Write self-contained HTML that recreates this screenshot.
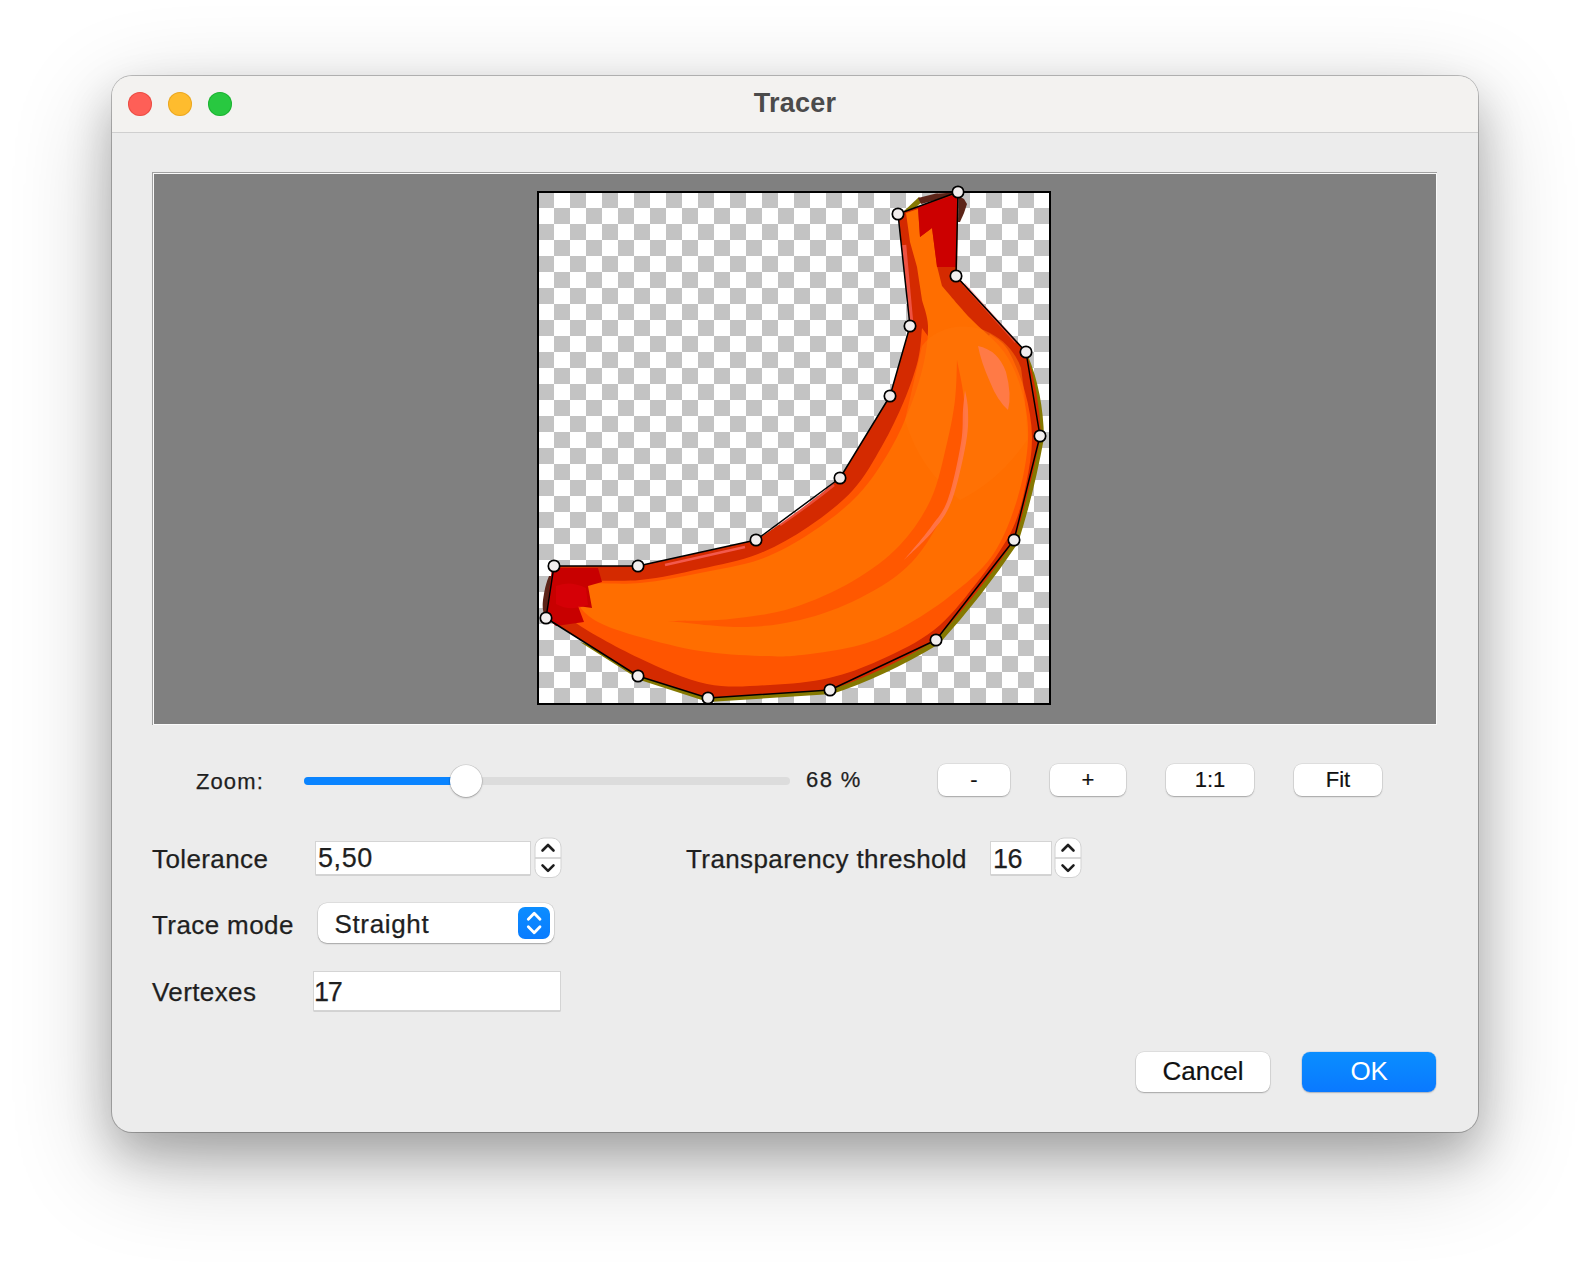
<!DOCTYPE html>
<html><head><meta charset="utf-8">
<style>
html,body{margin:0;padding:0;width:1590px;height:1280px;overflow:hidden;background:#ffffff;}
body{font-family:"Liberation Sans",sans-serif;position:relative;}
.abs{position:absolute;}
#win{position:absolute;left:112px;top:76px;width:1366px;height:1056px;border-radius:20px;background:#ececec;
 box-shadow:0 0 0 1px rgba(0,0,0,0.24),0 22px 45px rgba(0,0,0,0.22),0 30px 100px rgba(0,0,0,0.24);overflow:hidden;}
#title{position:absolute;left:0;top:0;width:1366px;height:56px;background:#f3f2f0;border-bottom:1px solid #cfcfcf;}
.tl{position:absolute;top:16px;width:24px;height:24px;border-radius:50%;}
.ttl{position:absolute;left:0;width:1366px;top:-1px;height:56px;line-height:56px;text-align:center;font-weight:700;font-size:27px;color:#4b4b4b;letter-spacing:0.2px;}
.lbl{position:absolute;font-size:26px;color:#1f1f1f;white-space:pre;line-height:30px;letter-spacing:0.4px;-webkit-text-stroke:0.25px #1f1f1f;}
.fld{position:absolute;background:#fff;box-shadow:0 0 0 1px #d4d4d4,0 1px 0 0.5px #b8b8b8;}
.btn{position:absolute;background:#fff;border-radius:8px;box-shadow:0 0 0 0.5px rgba(0,0,0,0.12),0 1px 1.5px rgba(0,0,0,0.25);text-align:center;color:#111;font-size:22px;-webkit-text-stroke:0.2px currentColor;}
</style></head><body>
<div id="win">
  <div id="title">
    <div class="tl" style="left:16px;background:#fe5f57;box-shadow:inset 0 0 0 1px rgba(200,40,30,0.35)"></div>
    <div class="tl" style="left:56px;background:#febc2e;box-shadow:inset 0 0 0 1px rgba(200,130,0,0.35)"></div>
    <div class="tl" style="left:96px;background:#28c840;box-shadow:inset 0 0 0 1px rgba(0,140,20,0.35)"></div>
    <div class="ttl">Tracer</div>
  </div>
</div>
<!-- preview -->
<div class="abs" style="left:152px;top:172px;width:1285px;height:553px;background:#fafafa;box-shadow:inset 1px 1px 0 #a0a0a0;"></div>
<div class="abs" style="left:154px;top:174px;width:1282px;height:550px;background:#808080;"></div>
<svg class="abs" style="left:527px;top:181px;" width="534" height="534" viewBox="527 181 534 534">
<defs>
<pattern id="chk" x="538" y="192" width="32" height="32" patternUnits="userSpaceOnUse"><rect width="32" height="32" fill="#ffffff"/><rect width="16" height="16" fill="#c3c3c3"/><rect x="16" y="16" width="16" height="16" fill="#c3c3c3"/></pattern>
</defs>
<rect x="537" y="191" width="514" height="514" fill="url(#chk)"/>
<g id="banana">
<!-- olive shadow (right/bottom only) -->
<path d="M 1028,356 Q 1043,392 1044,438 Q 1034,493 1018,543 Q 981,598 939,644 Q 884,677 832,694 L 708,702 L 640,680 L 580,642 L 640,660 L 710,690 L 830,686 L 930,636 L 1010,538 L 1036,436 Q 1034,392 1022,356 Z" fill="#857800"/>
<!-- dark brown blotches -->
<path d="M 904,211 L 919,197 L 923,201 L 908,214 Z" fill="#857800"/>
<path d="M 918,198 L 936,193.5 L 957,192.5 L 958,194 L 921,204 Z" fill="#5c2418"/>
<path d="M 958.5,196 L 964,199 L 967,204 L 964,213 L 960,222 L 958,222 Z" fill="#5c2418"/>
<path d="M 549,576 Q 545,585 543,600 Q 542,608 544,614 L 547,612 L 552,576 Z" fill="#5c2418"/>
<!-- outer red -->
<path d="M 898,214 L 958,192 L 957,276 L 1026,352 Q 1039,390 1041,436 Q 1030,490 1015,540 Q 978,594 936,640 Q 881,673 830,690 L 708,698 L 638,676 L 546,618 L 554,566 L 638,566 L 756,540 Q 800,512 840,478 L 890,396 L 910,326 Z" fill="#d42a00"/>
<!-- orange-red band -->
<path d="M 990.0,334.0 C 993.0,336.7 1002.2,340.3 1008.0,350.0 C 1013.8,359.7 1021.0,377.5 1025.0,392.0 C 1029.0,406.5 1031.8,421.7 1032.0,437.0 C 1032.2,452.3 1029.5,468.2 1026.0,484.0 C 1022.5,499.8 1019.5,515.2 1011.0,532.0 C 1002.5,548.8 987.8,568.7 975.0,585.0 C 962.2,601.3 949.8,617.5 934.0,630.0 C 918.2,642.5 897.5,652.0 880.0,660.0 C 862.5,668.0 847.3,673.8 829.0,678.0 C 810.7,682.2 790.3,684.0 770.0,685.0 C 749.7,686.0 728.8,688.5 707.0,684.0 C 685.2,679.5 661.5,668.7 639.0,658.0 C 616.5,647.3 584.0,629.7 572.0,620.0 C 560.0,610.3 567.7,606.3 567.0,600.0 C 566.3,593.7 555.8,585.3 568.0,582.0 C 580.2,578.7 618.0,582.2 640.0,580.0 C 662.0,577.8 680.3,573.3 700.0,569.0 C 719.7,564.7 740.0,561.0 758.0,554.0 C 776.0,547.0 792.2,537.7 808.0,527.0 C 823.8,516.3 840.7,503.5 853.0,490.0 C 865.3,476.5 873.5,460.8 882.0,446.0 C 890.5,431.2 898.0,415.3 904.0,401.0 C 910.0,386.7 915.0,372.2 918.0,360.0 C 921.0,347.8 921.3,333.3 922.0,328.0 L 960,380 Z" fill="#ff5500"/>
<!-- main orange -->
<path d="M 942.0,286.0 C 946.7,291.3 959.7,307.0 970.0,318.0 C 980.3,329.0 995.3,339.7 1004.0,352.0 C 1012.7,364.3 1018.0,377.3 1022.0,392.0 C 1026.0,406.7 1028.8,422.0 1028.0,440.0 C 1027.2,458.0 1023.0,480.7 1017.0,500.0 C 1011.0,519.3 1003.2,540.0 992.0,556.0 C 980.8,572.0 964.8,584.2 950.0,596.0 C 935.2,607.8 918.0,618.8 903.0,627.0 C 888.0,635.2 876.8,640.3 860.0,645.0 C 843.2,649.7 818.7,653.2 802.0,655.0 C 785.3,656.8 777.0,656.7 760.0,656.0 C 743.0,655.3 720.0,654.2 700.0,651.0 C 680.0,647.8 657.0,641.8 640.0,637.0 C 623.0,632.2 608.3,627.5 598.0,622.0 C 587.7,616.5 581.7,610.2 578.0,604.0 C 574.3,597.8 565.7,588.5 576.0,585.0 C 586.3,581.5 619.3,585.0 640.0,583.0 C 660.7,581.0 679.8,577.0 700.0,573.0 C 720.2,569.0 742.3,565.8 761.0,559.0 C 779.7,552.2 795.8,542.7 812.0,532.0 C 828.2,521.3 845.0,508.7 858.0,495.0 C 871.0,481.3 881.2,465.0 890.0,450.0 C 898.8,435.0 905.3,419.7 911.0,405.0 C 916.7,390.3 921.2,375.2 924.0,362.0 C 926.8,348.8 928.3,336.3 928.0,326.0 C 927.7,315.7 923.0,304.3 922.0,300.0 L 917,267 L 910,242 L 906,213 L 918,209 L 920,237 L 932,228 L 937,266 Z" fill="#ff6e00"/>
<!-- lighter upper body -->
<path d="M 922,346 C 935,328 965,320 990,333 C 1005,341 1015,352 1021,368 Q 1026,400 1027,440 Q 1000,480 960,500 Q 920,470 905,420 Z" fill="#ff7408" opacity="0.55"/>
<!-- ridge -->
<path d="M 668.0,621.0 C 680.0,622.0 718.0,627.2 740.0,627.0 C 762.0,626.8 780.0,624.8 800.0,620.0 C 820.0,615.2 841.3,607.7 860.0,598.0 C 878.7,588.3 897.5,577.5 912.0,562.0 C 926.5,546.5 938.5,524.8 947.0,505.0 C 955.5,485.2 960.2,460.5 963.0,443.0 C 965.8,425.5 965.0,413.8 964.0,400.0 C 963.0,386.2 958.2,366.7 957.0,360.0 C 956.7,366.7 956.7,386.2 955.0,400.0 C 953.3,413.8 951.0,426.5 947.0,443.0 C 943.0,459.5 938.8,482.0 931.0,499.0 C 923.2,516.0 913.0,531.3 900.0,545.0 C 887.0,558.7 871.0,570.5 853.0,581.0 C 835.0,591.5 812.5,601.7 792.0,608.0 C 771.5,614.3 750.7,616.8 730.0,619.0 C 709.3,621.2 678.3,620.7 668.0,621.0 Z" fill="#ff5800"/>
<path d="M 904.0,560.0 C 908.8,555.2 925.0,541.0 933.0,531.0 C 941.0,521.0 946.5,514.7 952.0,500.0 C 957.5,485.3 963.3,458.0 966.0,443.0 C 968.7,428.0 968.2,418.8 968.0,410.0 C 967.8,401.2 965.5,393.3 965.0,390.0 C 964.7,393.3 963.7,401.2 963.0,410.0 C 962.3,418.8 963.5,428.2 961.0,443.0 C 958.5,457.8 953.0,485.0 948.0,499.0 C 943.0,513.0 938.3,516.8 931.0,527.0 C 923.7,537.2 908.5,554.5 904.0,560.0 Z" fill="#ff7a58" opacity="0.8"/>
<!-- shoulder pink patch -->
<path d="M 978,346 Q 998,350 1006,372 Q 1012,395 1008,410 Q 997,400 990,382 Q 981,362 978,346 Z" fill="#ff7b52" opacity="0.85"/>
<!-- top edge pink highlights -->
<path d="M 665,565 Q 705,556 745,547" stroke="#ff6e6e" stroke-width="2.5" fill="none" opacity="0.7"/>
<path d="M 780,525 Q 812,503 834,485" stroke="#ff6e6e" stroke-width="2.5" fill="none" opacity="0.5"/>
<path d="M 904,245 L 911,322" stroke="#ff6e6e" stroke-width="4.5" fill="none" opacity="0.6"/>
<path d="M 964,284 L 1016,342" stroke="#ff6e6e" stroke-width="3" fill="none" opacity="0.45"/>
<!-- stem red -->
<path d="M 918,207 L 957,194 L 956,267 L 937,267 L 932,228 L 920,237 Z" fill="#cc0000"/>
<!-- tip red -->
<path d="M 552,568 L 598,568 L 602,582 L 588,586 L 592,608 L 578,606 L 584,622 L 556,626 L 546,617 Z" fill="#c80000"/>
<path d="M 556,586 Q 570,580 586,588 L 588,605 Q 570,612 556,604 Z" fill="#d80008" opacity="0.8"/>
</g>
<rect x="538" y="192" width="512" height="512" fill="none" stroke="#000" stroke-width="2"/>
<!-- trace polygon -->
<polygon points="958,192 956,276 1026,352 1040,436 1014,540 936,640 830,690 708,698 638,676 546,618 554,566 638,566 756,540 840,478 890,396 910,326 898,214" fill="none" stroke="#000" stroke-width="1.5" stroke-linejoin="round"/>
<g fill="#f2eeee" stroke="#000" stroke-width="1.7">
<circle cx="958" cy="192" r="5.7"/><circle cx="956" cy="276" r="5.7"/><circle cx="1026" cy="352" r="5.7"/><circle cx="1040" cy="436" r="5.7"/><circle cx="1014" cy="540" r="5.7"/><circle cx="936" cy="640" r="5.7"/><circle cx="830" cy="690" r="5.7"/><circle cx="708" cy="698" r="5.7"/><circle cx="638" cy="676" r="5.7"/><circle cx="546" cy="618" r="5.7"/><circle cx="554" cy="566" r="5.7"/><circle cx="638" cy="566" r="5.7"/><circle cx="756" cy="540" r="5.7"/><circle cx="840" cy="478" r="5.7"/><circle cx="890" cy="396" r="5.7"/><circle cx="910" cy="326" r="5.7"/><circle cx="898" cy="214" r="5.7"/>
</g>
</svg>

<div class="lbl" style="left:196px;top:767px;font-size:22px;letter-spacing:1.1px;">Zoom:</div>
<div class="abs" style="left:304px;top:777px;width:486px;height:8px;border-radius:4px;background:#dcdcdc;"></div>
<div class="abs" style="left:304px;top:777px;width:166px;height:8px;border-radius:4px;background:#0a84ff;"></div>
<div class="abs" style="left:449.5px;top:765px;width:32px;height:32px;border-radius:50%;background:#fff;box-shadow:0 0 0 0.5px rgba(0,0,0,0.15),0 1px 2px rgba(0,0,0,0.28);"></div>
<div class="lbl" style="left:806px;top:765px;font-size:22px;letter-spacing:1.4px;">68 %</div>

<div class="btn" style="left:938px;top:764px;width:72px;height:32px;line-height:32px;">-</div>
<div class="btn" style="left:1050px;top:764px;width:76px;height:32px;line-height:32px;">+</div>
<div class="btn" style="left:1166px;top:764px;width:88px;height:32px;line-height:32px;">1:1</div>
<div class="btn" style="left:1294px;top:764px;width:88px;height:32px;line-height:32px;">Fit</div>

<div class="lbl" style="left:152px;top:844px;">Tolerance</div>
<div class="fld" style="left:316px;top:842px;width:214px;height:32px;"></div>
<div class="lbl" style="left:318px;top:842.5px;letter-spacing:0.6px;font-size:27px;">5,50</div>
<svg class="abs" style="left:534px;top:837px" width="28" height="42" viewBox="0 0 28 42">
<rect x="1" y="1" width="26" height="39.5" rx="9" fill="#fff" stroke="#d2d2d2" stroke-width="1"/>
<line x1="1" y1="21" x2="27" y2="21" stroke="#d0d0d0" stroke-width="1.6"/>
<polyline points="8.5,13.5 14,8 19.5,13.5" fill="none" stroke="#1e1e1e" stroke-width="2.6" stroke-linecap="round" stroke-linejoin="round"/>
<polyline points="8.5,28.3 14,33.8 19.5,28.3" fill="none" stroke="#1e1e1e" stroke-width="2.6" stroke-linecap="round" stroke-linejoin="round"/>
</svg>

<div class="lbl" style="left:686px;top:844px;">Transparency threshold</div>
<div class="fld" style="left:991px;top:842px;width:60px;height:32px;"></div>
<div class="lbl" style="left:993px;top:843.5px;letter-spacing:-0.5px;font-size:27px;">16</div>
<svg class="abs" style="left:1054px;top:837px" width="28" height="42" viewBox="0 0 28 42">
<rect x="1" y="1" width="26" height="39.5" rx="9" fill="#fff" stroke="#d2d2d2" stroke-width="1"/>
<line x1="1" y1="21" x2="27" y2="21" stroke="#d0d0d0" stroke-width="1.6"/>
<polyline points="8.5,13.5 14,8 19.5,13.5" fill="none" stroke="#1e1e1e" stroke-width="2.6" stroke-linecap="round" stroke-linejoin="round"/>
<polyline points="8.5,28.3 14,33.8 19.5,28.3" fill="none" stroke="#1e1e1e" stroke-width="2.6" stroke-linecap="round" stroke-linejoin="round"/>
</svg>

<div class="lbl" style="left:152px;top:910px;">Trace mode</div>
<div class="btn" style="left:318px;top:903px;width:236px;height:40px;border-radius:9px;"></div>
<div class="lbl" style="left:334.5px;top:908.5px;letter-spacing:0.65px;">Straight</div>
<div class="abs" style="left:518px;top:907px;width:32px;height:32px;border-radius:7px;background:linear-gradient(#0b8dff,#0a7cff);"></div>
<svg class="abs" style="left:518px;top:907px" width="32" height="32" viewBox="518 907 32 32">
<polyline points="528.3,919.3 534.2,913.3 540,919.3" fill="none" stroke="#fff" stroke-width="2.8" stroke-linecap="round" stroke-linejoin="round"/>
<polyline points="528.3,926.8 534.2,932.8 540,926.8" fill="none" stroke="#fff" stroke-width="2.8" stroke-linecap="round" stroke-linejoin="round"/>
</svg>

<div class="lbl" style="left:152px;top:976.5px;">Vertexes</div>
<div class="fld" style="left:314px;top:972px;width:246px;height:38px;"></div>
<div class="lbl" style="left:314px;top:977px;letter-spacing:-1.3px;font-size:27px;">17</div>

<div class="btn" style="left:1136px;top:1052px;width:134px;height:40px;line-height:38px;font-size:26px;">Cancel</div>
<div class="btn" style="left:1302px;top:1052px;width:134px;height:40px;line-height:38px;font-size:26px;background:linear-gradient(#0a8eff,#0a79ff);color:#fff;letter-spacing:-0.4px;-webkit-text-stroke:0px;box-shadow:0 0 0 0.5px rgba(0,80,200,0.2),0 1px 1.5px rgba(0,0,0,0.2);">OK</div>
</body></html>
